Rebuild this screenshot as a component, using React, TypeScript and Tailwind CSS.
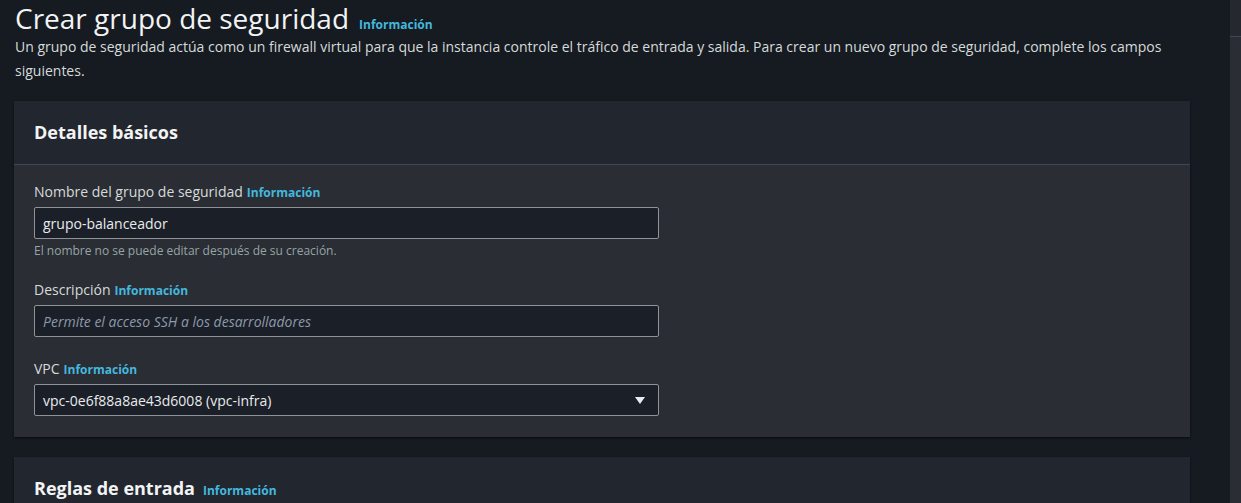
import React from "react";

function Info({ gap = "ml-1" }: { gap?: string }) {
  return <span className={`text-[12px] leading-none font-bold text-[#44b8de] ${gap}`}>Información</span>;
}

export default function App() {
  return (
    <div className="flex h-[503px] w-[1241px] overflow-hidden bg-[#161a21] text-[#d1d5db]" style={{ fontFamily: "'Open Sans', 'Noto Sans', sans-serif" }}>
      <div className="w-[1230px] pl-[14px] pr-[40px]">
        <div className="pl-px pt-[2px]">
          <h1 className="text-[28px] leading-[32px] text-[#f2f3f3]">
            Crear grupo de seguridad<Info gap="ml-2.5" />
          </h1>
          <p className="mt-[1px] text-[14px] leading-[24px] text-[#d5dbdb]">
            Un grupo de seguridad actúa como un firewall virtual para que la instancia controle el tráfico de entrada y salida. Para crear un nuevo grupo de seguridad, complete los campos siguientes.
          </p>
        </div>

        <div className="mt-[18px] bg-[#2a2d33] shadow-[0_1px_2px_rgba(0,0,0,0.6)]">
          <div className="h-[64px] border-b border-[#414650] bg-[#22262e] px-5 flex items-center">
            <h2 className="text-[18px] font-bold text-[#f2f3f3]">Detalles básicos</h2>
          </div>
          <div className="px-5 pt-[16px] pb-[21px]">
            <label className="block text-[14px] leading-[22px] text-[#d5dbdb]">
              Nombre del grupo de seguridad<Info />
            </label>
            <div className="mt-[4px] w-[625px] h-[32px] rounded-[2px] border border-[#8d9396] bg-[#1b1f28] px-2 flex items-center text-[14px] text-[#e9ebed]">
              grupo-balanceador
            </div>
            <p className="mt-[4px] text-[12px] leading-[16px] text-[#95a5a6]">El nombre no se puede editar después de su creación.</p>

            <label className="mt-[20px] block text-[14px] leading-[22px] text-[#d5dbdb]">
              Descripción<Info />
            </label>
            <div className="mt-[4px] w-[625px] h-[32px] rounded-[2px] border border-[#8d9396] bg-[#1b1f28] px-2 flex items-center text-[14px] italic text-[#8d99a8]">
              Permite el acceso SSH a los desarrolladores
            </div>

            <label className="mt-[21px] block text-[14px] leading-[22px] text-[#d5dbdb]">
              VPC<Info />
            </label>
            <div className="mt-[4px] w-[625px] h-[32px] rounded-[2px] border border-[#8d9396] bg-[#1b1f28] px-2 flex items-center justify-between text-[14px] text-[#e9ebed]">
              <span>vpc-0e6f88a8ae43d6008 (vpc-infra)</span>
              <svg width="12" height="9" viewBox="0 0 12 9" className="mr-[4px]">
                <path d="M1 1h10L6 8z" fill="#e9ebed" />
              </svg>
            </div>
          </div>
        </div>

        <div className="mt-[20px] bg-[#22262e] shadow-[0_1px_2px_rgba(0,0,0,0.6)]">
          <div className="h-[64px] px-5 pt-[17px]">
            <h2 className="text-[18px] leading-[28px] font-bold text-[#f2f3f3]">
              Reglas de entrada<Info gap="ml-2" />
            </h2>
          </div>
        </div>
      </div>
      <div className="w-[11px] bg-[#2a2d33]">
        <div className="h-[37px] border-b border-[#414650] bg-[#25282e]" />
      </div>
    </div>
  );
}
